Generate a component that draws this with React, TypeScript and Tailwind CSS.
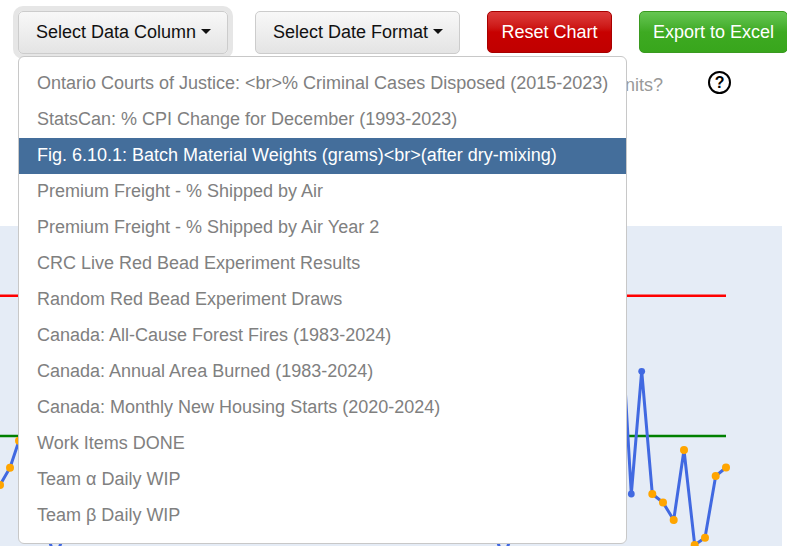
const items = [
  "Ontario Courts of Justice: <br>% Criminal Cases Disposed (2015-2023)",
  "StatsCan: % CPI Change for December (1993-2023)",
  "Fig. 6.10.1: Batch Material Weights (grams)<br>(after dry-mixing)",
  "Premium Freight - % Shipped by Air",
  "Premium Freight - % Shipped by Air Year 2",
  "CRC Live Red Bead Experiment Results",
  "Random Red Bead Experiment Draws",
  "Canada: All-Cause Forest Fires (1983-2024)",
  "Canada: Annual Area Burned (1983-2024)",
  "Canada: Monthly New Housing Starts (2020-2024)",
  "Work Items DONE",
  "Team α Daily WIP",
  "Team β Daily WIP",
];

function Caret() {
  return <span className="ml-[5px] inline-block align-[4px] w-0 h-0 border-x-[5px] border-x-transparent border-t-[5px] border-t-[#111]" />;
}

function Chart() {
  const orange: [number, number][] = [[652.3, 494], [663, 502.5], [673.7, 520], [684, 450], [694.7, 545], [705, 537.7], [715.7, 476], [726, 467.5]];
  const line = "620,300 631.3,494 641.7,371 652.3,494 663,502.5 673.7,520 684,450 694.7,545 705,537.7 715.7,476 726,467.5";
  return (
    <svg className="block w-[782px] h-[320px]" viewBox="0 226 782 320">
      <line x1="0" y1="295.7" x2="726" y2="295.7" stroke="#ff0000" strokeWidth="2.6" />
      <line x1="0" y1="436" x2="726" y2="436" stroke="#008000" strokeWidth="2.5" />
      <polyline points="0,485 10,467.7 19,440.7 30,400" fill="none" stroke="#4169e1" strokeWidth="3" />
      <polyline points="46,530 55.5,560 65,530" fill="none" stroke="#4169e1" strokeWidth="3" />
      <polyline points="494,530 503.5,560 513,530" fill="none" stroke="#4169e1" strokeWidth="3" />
      <polyline points={line} fill="none" stroke="#4169e1" strokeWidth="3" />
      <circle cx="631.3" cy="494" r="3.4" fill="#4169e1" />
      <circle cx="641.7" cy="371.3" r="3.4" fill="#4169e1" />
      <circle cx="0" cy="485" r="4" fill="#ffa500" />
      <circle cx="10" cy="467.7" r="4" fill="#ffa500" />
      <circle cx="19" cy="440.7" r="4" fill="#ffa500" />
      {orange.map(([x, y]) => <circle key={x} cx={x} cy={y} r="4" fill="#ffa500" />)}
    </svg>
  );
}

const grey = "border-[#ccc] bg-gradient-to-b from-[#f8f8f8] to-[#e4e4e4] text-[#111]";

export default function App() {
  return (
    <div className="relative flex h-[546px] w-[787px] flex-col overflow-hidden bg-white font-['Liberation_Sans',Arial,sans-serif] text-[18px]">
      <div className="flex items-start gap-[27px] pl-[18px] pt-[11px]">
        <button className={`h-[43px] w-[210px] shrink-0 rounded-[5px] border pl-[17px] text-left shadow-[0_0_0_5px_#e6e6e6] ${grey}`}>
          Select Data Column<Caret />
        </button>
        <button className={`h-[43px] w-[205px] shrink-0 rounded-[5px] border pl-[17px] text-left ${grey}`}>
          Select Date Format<Caret />
        </button>
        <button className="h-[42px] w-[125px] shrink-0 rounded-[5px] border border-[#a80000] bg-gradient-to-b from-[#dd3a3a] via-[#c80000] to-[#c00000] text-white">
          Reset Chart
        </button>
        <button className="h-[42px] w-[149px] shrink-0 rounded-[5px] border border-[#3a9a20] bg-gradient-to-b from-[#66c652] via-[#3eaa22] to-[#38a61c] text-white">
          Export to Excel
        </button>
      </div>

      <div className="mt-[17px] flex h-[23px] items-start pl-[625px]">
        <span className="leading-[29px] text-[#999]">nits?</span>
        <span className="ml-[45px] flex h-[23px] w-[23px] items-center justify-center rounded-full border-2 border-black text-[16px] font-bold leading-none text-black">?</span>
      </div>

      <div className="mt-[132px] h-[320px] w-[782px] bg-[#e5ecf6]">
        <Chart />
      </div>

      <div className="absolute left-[18px] top-[56px] w-[609px] rounded-[6px] border border-[#c8c8c8] bg-white pb-[9px] pt-[9px]">
        {items.map((t, i) => (
          <div key={t} className={`h-[36px] whitespace-nowrap pl-[18px] leading-[34px] ${i === 2 ? "bg-[#446e9b] text-white" : "text-[#808080]"}`}>
            {t}
          </div>
        ))}
      </div>
    </div>
  );
}
